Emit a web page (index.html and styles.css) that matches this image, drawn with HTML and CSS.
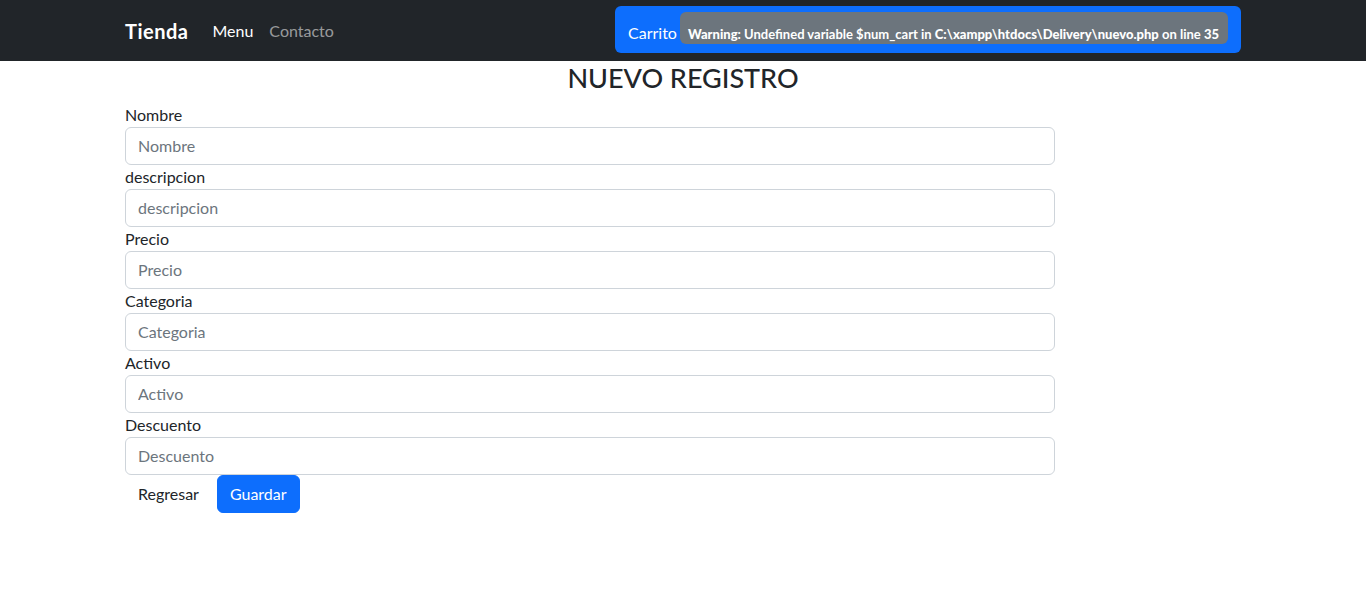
FILE: index.html
```html
<!DOCTYPE html>
<html lang="es">
<head>
<meta charset="utf-8">
<title>Tienda</title>
<link rel="stylesheet" href="styles.css">
</head>
<body>
<header class="navbar">
  <div class="container nav-inner">
    <a class="brand" href="#">Tienda</a>
    <ul class="nav-links">
      <li><a class="nav-link active" href="#">Menu</a></li>
      <li><a class="nav-link" href="#">Contacto</a></li>
    </ul>
    <a class="btn-cart" href="#">Carrito <span class="badge"><br>
<b>Warning</b>:  Undefined variable $num_cart in <b>C:\xampp\htdocs\Delivery\nuevo.php</b> on line <b>35</b><br></span></a>
  </div>
</header>
<main class="container">
  <h3 class="title">NUEVO REGISTRO</h3>
  <form class="form">
    <label class="label" for="nombre">Nombre</label>
    <input class="input" id="nombre" placeholder="Nombre">
    <label class="label" for="descripcion">descripcion</label>
    <input class="input" id="descripcion" placeholder="descripcion">
    <label class="label" for="precio">Precio</label>
    <input class="input" id="precio" placeholder="Precio">
    <label class="label" for="categoria">Categoria</label>
    <input class="input" id="categoria" placeholder="Categoria">
    <label class="label" for="activo">Activo</label>
    <input class="input" id="activo" placeholder="Activo">
    <label class="label" for="descuento">Descuento</label>
    <input class="input" id="descuento" placeholder="Descuento">
    <div class="actions">
      <a class="btn btn-link" href="#">Regresar</a>
      <button class="btn btn-primary" type="button">Guardar</button>
    </div>
  </form>
</main>
</body>
</html>
```
FILE: styles.css
```css
* { box-sizing: border-box; }
body {
  margin: 0;
  font-family: "Lato", "Open Sans", sans-serif;
  font-size: 16px;
  line-height: 1.5;
  color: #212529;
  background: #fff;
}
a { text-decoration: none; }
.container {
  width: 1140px;
  margin: 0 auto;
  padding: 0 12px;
}
.navbar {
  background: #212529;
  height: 61px;
}
.nav-inner {
  display: flex;
  align-items: center;
  height: 100%;
}
.brand {
  color: #fff;
  font-size: 20px;
  font-weight: 700;
  letter-spacing: 0.5px;
  margin-right: 16px;
  padding: 5px 0;
  line-height: 30px;
}
.nav-links {
  display: flex;
  list-style: none;
  margin: 0 auto 0 0;
  padding: 0;
}
.nav-link {
  display: block;
  padding: 8px;
  color: rgba(255,255,255,.55);
}
.nav-link.active { color: #fff; }
.btn-cart {
  display: inline-block;
  background: #0d6efd;
  color: #fff;
  border-radius: 6px;
  height: 47px;
  padding: 6px 13px 0 13px;
  margin-bottom: 2px;
  line-height: 1.5;
  white-space: nowrap;
}
.badge {
  display: inline-block;
  background: #6c757d;
  color: #fff;
  font-size: 13px;
  font-weight: 700;
  line-height: 12px;
  padding: 4px 9px 4px 8px;
  margin-left: -1px;
  border-radius: 6px;
  text-align: left;
}
.badge b { font-weight: 900; }
.title {
  margin: 0 0 8px;
  text-align: center;
  font-size: 27px;
  font-weight: 500;
  line-height: 33.6px;
}
.form {
  width: 930px;
  display: flex;
  flex-direction: column;
}
.label { display: block; }
.input {
  display: block;
  width: 100%;
  height: 38px;
  padding: 6px 12px;
  font: inherit;
  color: #212529;
  border: 1px solid #ced4da;
  border-radius: 6px;
  background: #fff;
}
.input::placeholder { color: #6c757d; }
.actions {
  display: flex;
  gap: 5px;
}
.btn {
  display: inline-block;
  font: inherit;
  padding: 6px 12px;
  border: 1px solid transparent;
  border-radius: 6px;
  height: 38px;
  line-height: 24px;
  cursor: pointer;
}
.btn-link { color: #212529; }
.btn-primary {
  background: #0d6efd;
  color: #fff;
  border-color: #0d6efd;
}
```
